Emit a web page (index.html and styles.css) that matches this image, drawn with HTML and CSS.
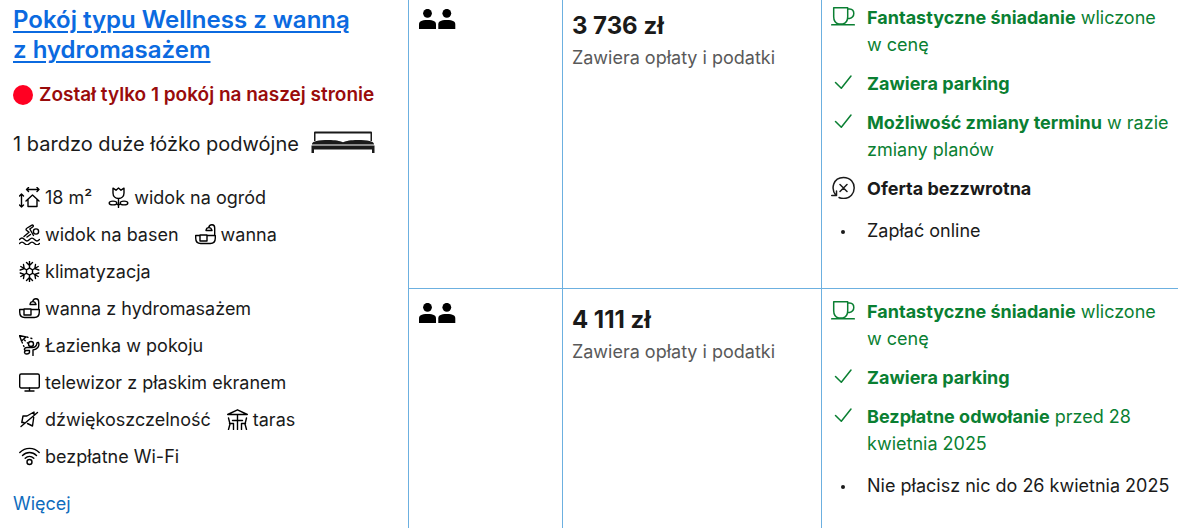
FILE: index.html
```
<!DOCTYPE html>
<html lang="pl">
<head>
    <meta charset="UTF-8">
    <meta name="viewport" content="width=device-width, initial-scale=1.0">
    <title>Pokój typu Wellness z wanną z hydromasażem</title>
    <link rel="stylesheet" href="styles.css">
</head>
<body>
    <!-- Icon definitions -->
    <svg class="sprite" aria-hidden="true">
        <symbol id="icon-bath" viewBox="0 0 21 21">
            <path d="M5 11.500H.7v2.500c0 3.500 2 5.500 5 5.500h9.600c3 0 5-2 5-5.500v-2.500H12M5 11h7v6H5zM19.700 11.500V4c0-4.200-5-4.200-6-.5M11 6.500c.5-3.800 5-3.800 6 0z"/>
        </symbol>
        <symbol id="icon-people" viewBox="0 0 38 20">
            <circle cx="9.500" cy="4.300" r="4.400"/>
            <path d="M1 20v-4.500c0-3 2-4.500 8.500-4.500s8.500 1.500 8.500 4.500V20z"/>
            <circle cx="28.800" cy="4.300" r="4.400"/>
            <path d="M20.300 20v-4.500c0-3 2-4.500 8.500-4.500s8.500 1.500 8.500 4.500V20z"/>
        </symbol>
        <symbol id="icon-cup" viewBox="0 0 24 24">
            <path d="M2.700 3.700h14v9c0 3.800-2 6.500-5 7.300h-4c-3-.8-5-3.500-5-7.300zM16.700 5h2c5.500.5 5.500 8.500-.3 9.500h-2M.7 20.800h22.600"/>
        </symbol>
        <symbol id="icon-check" viewBox="0 0 24 24">
            <path d="M4.500 12.500l5.800 5.800L20 6"/>
        </symbol>
    </svg>

    <table class="rooms">
        <tbody>
            <tr>
                <td class="room" rowspan="2">
                    <a class="room-name" href="#">Pokój typu Wellness z wanną z&nbsp;hydromasażem</a>
                    <div class="urgency"><span class="dot"></span>Został tylko 1 pokój na naszej stronie</div>
                    <div class="bed">
                        1 bardzo duże łóżko podwójne
                        <svg class="bed-icon" viewBox="0 0 64 22">
                            <path d="M3 1.500Q3 .5 4 .5h56q1 0 1 1V10h-1.500V2.500h-55V10H3z"/>
                            <path d="M1 13.500C1 11 4 9.500 14 9c9-.3 14 .5 18 2.300C36 9.500 41 8.700 50 9c10 .5 13 2 13 4.500z"/>
                            <path d="M.5 14.500h63V22H61v-3.500H3V22H.5z"/>
                        </svg>
                    </div>
                    <ul class="facilities">
                        <li>
                            <svg class="icon" viewBox="0 0 21 21"><path d="M7.500 2.500h12.500M9.500.5l-2 2 2 2M18 .5l2 2-2 2M2.500 7v13M.5 9l2-2 2 2M.5 18l2 2 2-2M7 14l6.500-6 6.500 6M9 12.500v7h9v-7"/></svg>
                            18 m²
                        </li>
                        <li>
                            <svg class="icon" viewBox="0 0 21 21"><path d="M5 1.200l3 2L10.500 1 13 3.200l3-2V6c0 3.500-2.500 5.500-5.500 5.500S5 9.500 5 6zM10.500 11.500v9M10.500 17.500h1.200M10.500 17.500H9.300"/><ellipse cx="5" cy="16" rx="3.800" ry="1.900"/><ellipse cx="16" cy="16" rx="3.800" ry="1.900"/></svg>
                            widok na ogród
                        </li>
                        <li>
                            <svg class="icon" viewBox="0 0 21 21"><circle cx="17" cy="7.500" r="2.600"/><path d="M5 12.500l5-4.200-2.500-2c-.8-.9-.3-1.700.7-2.300L12.500 1.300c1.500-.8 2.500.8 1.200 1.700L10.800 5l3.700 6.500M8 13l3.500-2.500M.5 15.500c2-2 3-2 5 0s3 2 5 0 3-2 5 0 3 2 5 0M.5 19.500c2-2 3-2 5 0s3 2 5 0 3-2 5 0 3 2 5 0"/></svg>
                            widok na basen
                        </li>
                        <li><svg class="icon"><use href="#icon-bath"/></svg> wanna</li>
                        <li>
                            <svg class="icon" viewBox="0 0 21 21"><path d="M10.500.5v20M1.800 5.500l17.400 10M1.800 15.500l17.400-10M7.500 1.500l3 3 3-3M7.500 19.500l3-3 3 3M1.200 9l4-1.300L4.500 3.500M19.800 9l-4-1.300.7-4.200M1.200 12l4 1.300-.7 4.200M19.800 12l-4 1.300.7 4.200"/><path class="white" d="M10.500 7l3 1.800v3.500l-3 1.700-3-1.700V8.800z"/></svg>
                            klimatyzacja
                        </li>
                        <li><svg class="icon"><use href="#icon-bath"/></svg> wanna z hydromasażem</li>
                        <li>
                            <svg class="icon" viewBox="0 0 21 21"><path d="M.5.500l6.500 1.500L2.500 6z"/><path class="dashed" d="M8 2l6.500 2M3 7l3 7M5.500 5l3 3"/><circle cx="12" cy="9" r="2.500"/><path d="M19.500 7.500c1.500 4-1.500 7-5.500 7.500v5.500M19.500 7.500c-2-.5-1.500 1.500-2 2.500-.8 1.800-2.500 2.500-4 2.500H8c-3 0-3.500 3-1 3h3.500v2M7 15.500c-2.500.8-1.500 3.500.5 3.500s3-.5 3-2"/></svg>
                            Łazienka w pokoju
                        </li>
                        <li>
                            <svg class="icon" viewBox="0 0 21 21"><rect x=".7" y="2" width="19.600" height="14" rx="1.500"/><path d="M10.500 16v3M6 19h9"/></svg>
                            telewizor z płaskim ekranem
                        </li>
                        <li>
                            <svg class="icon" viewBox="0 0 21 21"><path d="M2 17.500L18.500 3.500M5 13.500H2.800L4 7h4L15 3v2.500M8.500 14.500l5 2.500 1.200-8.500"/></svg>
                            dźwiękoszczelność
                        </li>
                        <li>
                            <svg class="icon" viewBox="0 0 21 21"><path d="M.7 5.500L10.500.8l9.800 4.700zM10.500 6v14.500M5.500 11.500h10M1.500 9l1.500 6-1.500 5.500M2.500 14.500h4v6M19.500 9L18 15l1.500 5.500M18.500 14.500h-4v6"/></svg>
                            taras
                        </li>
                        <li>
                            <svg class="icon" viewBox="0 0 21 21"><path d="M.8 6.500c5.500-5.500 14-5.500 19.400 0M3.500 9.500c4-4 10-4 14 0M6.200 12.300c2.500-2.500 6-2.500 8.600 0"/><circle cx="10.500" cy="16" r="2.500"/></svg>
                            bezpłatne Wi-Fi
                        </li>
                    </ul>
                    <a class="more" href="#">Więcej</a>
                </td>
                <td class="guests"><svg class="people" role="img" aria-label="2 osoby"><use href="#icon-people"/></svg></td>
                <td class="price">
                    <div class="amount">3 736 zł</div>
                    <div class="taxes">Zawiera opłaty i podatki</div>
                </td>
                <td class="options">
                    <ul class="conditions">
                        <li class="green"><svg class="mark"><use href="#icon-cup"/></svg><span><b>Fantastyczne śniadanie</b> wliczone w&nbsp;cenę</span></li>
                        <li class="green"><svg class="mark"><use href="#icon-check"/></svg><b>Zawiera parking</b></li>
                        <li class="green"><svg class="mark"><use href="#icon-check"/></svg><span><b>Możliwość zmiany terminu</b> w razie zmiany planów</span></li>
                        <li>
                            <svg class="mark" viewBox="0 0 24 24"><path d="M5 20.500C-.5 14 2 2.500 12.500 2.500c14.500 0 14 21 0 21-1.500 0-3-.3-4.500-1M.7 20.500H5.500V16M9 9.500l7 7M16 9.500l-7 7"/></svg>
                            <b>Oferta bezzwrotna</b>
                        </li>
                        <li class="note"><span class="mark bullet"></span>Zapłać online</li>
                    </ul>
                </td>
            </tr>
            <tr>
                <td class="guests"><svg class="people" role="img" aria-label="2 osoby"><use href="#icon-people"/></svg></td>
                <td class="price">
                    <div class="amount">4 111 zł</div>
                    <div class="taxes">Zawiera opłaty i podatki</div>
                </td>
                <td class="options">
                    <ul class="conditions">
                        <li class="green"><svg class="mark"><use href="#icon-cup"/></svg><span><b>Fantastyczne śniadanie</b> wliczone w&nbsp;cenę</span></li>
                        <li class="green"><svg class="mark"><use href="#icon-check"/></svg><b>Zawiera parking</b></li>
                        <li class="green"><svg class="mark"><use href="#icon-check"/></svg><span><b>Bezpłatne odwołanie</b> przed 28 kwietnia 2025</span></li>
                        <li class="note"><span class="mark bullet"></span>Nie płacisz nic do 26 kwietnia 2025</li>
                    </ul>
                </td>
            </tr>
        </tbody>
    </table>
</body>
</html>
```
FILE: styles.css
```
body {
    margin: 0;
    font-family: Inter, "Liberation Sans", sans-serif;
    font-size: 18px;
    line-height: 27px;
    color: #1a1a1a;
    background: #fff;
}

ul {
    list-style: none;
    margin: 0;
    padding: 0;
}

svg {
    fill: none;
    stroke: currentColor;
    stroke-linecap: round;
    stroke-linejoin: round;
}

.sprite {
    display: none;
}

.rooms {
    width: 100%;
    height: 100vh;
    table-layout: fixed;
    border-collapse: separate;
    border-spacing: 0;
}

td {
    box-sizing: border-box;
    vertical-align: top;
    padding: 9px 0 0 9px;
    border-left: 1px solid #6cb0e0;
}

tr:first-child td {
    padding-top: 4px;
}

tr + tr td {
    border-top: 1px solid #6cb0e0;
}

.room {
    width: 34.6%;
    padding-right: 24px;
    padding-left: 13px;
    border-left: none;
}

.guests {
    width: 13.1%;
}

.price {
    width: 22%;
}

/* Room description */
.room-name {
    display: block;
    margin-top: 1px;
    font-size: 24px;
    line-height: 30px;
    font-weight: 600;
    color: #0b6ae0;
    text-decoration: underline;
    text-decoration-thickness: 2px;
    text-underline-offset: 3px;
}

.urgency {
    display: flex;
    align-items: center;
    gap: 6px;
    margin-top: 16px;
    font-size: 19px;
    font-weight: 600;
    white-space: nowrap;
    color: #990b0b;
}

.dot {
    width: 20px;
    height: 20px;
    border-radius: 50%;
    background: #ff0022;
}

.bed {
    display: flex;
    align-items: flex-start;
    gap: 12px;
    margin-top: 23px;
    font-size: 20px;
}

.bed-icon {
    width: 64px;
    height: 22px;
    fill: currentColor;
    stroke: none;
}

.facilities {
    display: flex;
    flex-wrap: wrap;
    gap: 10px 16px;
    margin-top: 26px;
    padding-left: 6px;
}

.facilities li {
    display: flex;
    align-items: center;
    gap: 5px;
}

.icon {
    width: 21px;
    height: 21px;
    color: #000;
    stroke-width: 1.4;
}

.white {
    fill: #fff;
}

.dashed {
    stroke-dasharray: 1 3;
}

.more {
    display: inline-block;
    margin-top: 20px;
    color: #0f6cbd;
    text-decoration: none;
}

/* Guests and price */
.people {
    display: block;
    width: 38px;
    height: 20px;
    margin-top: 5px;
    fill: #000;
    stroke: none;
}

.amount {
    margin-top: 8px;
    font-size: 24px;
    font-weight: 700;
}

.taxes {
    margin-top: 5px;
    color: #595959;
}

/* Booking conditions */
.conditions {
    display: flex;
    flex-direction: column;
    gap: 12px;
}

.options {
    padding-bottom: 42px;
}

.conditions li {
    display: flex;
    gap: 12px;
}

.conditions .note {
    margin-top: 3px;
}

.conditions b {
    font-weight: 700;
}

.mark {
    flex: none;
    width: 24px;
    height: 24px;
    stroke-width: 1.5;
}

.bullet {
    display: flex;
    align-items: center;
    justify-content: center;
    height: 29px;
}

.bullet::before {
    content: "";
    width: 4px;
    height: 4px;
    border-radius: 50%;
    background: #1a1a1a;
}

.green {
    color: #0a7f32;
}
```
